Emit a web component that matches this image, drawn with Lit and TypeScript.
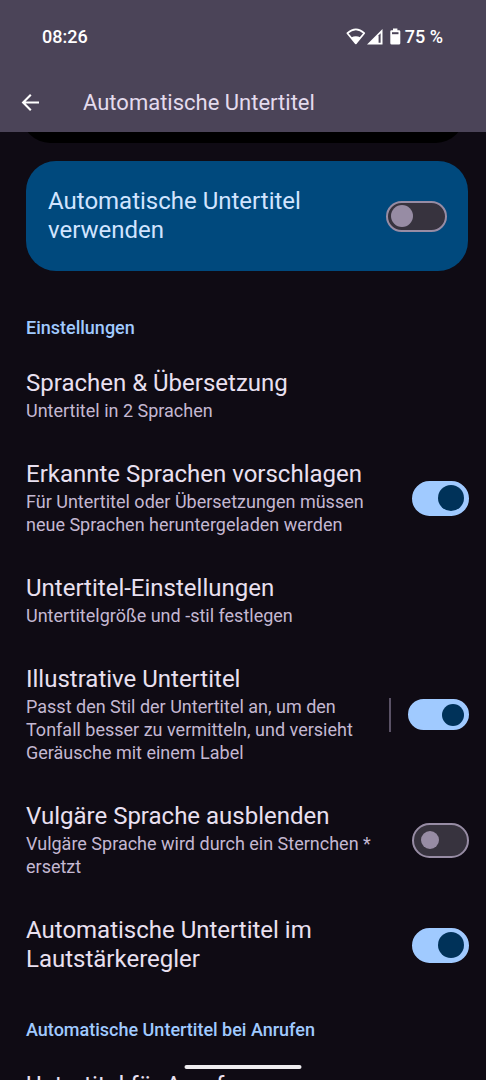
import { LitElement, html, css, nothing } from "lit";
import { customElement, property } from "lit/decorators.js";

interface Setting {
  id: string;
  title: string;
  summary?: string;
  toggle?: "on" | "off";
  compact?: boolean;
}

const SETTINGS: Setting[] = [
  { id: "languages", title: "Sprachen & Übersetzung", summary: "Untertitel in 2 Sprachen" },
  {
    id: "suggest",
    title: "Erkannte Sprachen vorschlagen",
    summary: "Für Untertitel oder Übersetzungen müssen neue Sprachen heruntergeladen werden",
    toggle: "on",
  },
  { id: "style", title: "Untertitel-Einstellungen", summary: "Untertitelgröße und -stil festlegen" },
  {
    id: "expressive",
    title: "Illustrative Untertitel",
    summary: "Passt den Stil der Untertitel an, um den Tonfall besser zu vermitteln, und versieht Geräusche mit einem Label",
    toggle: "on",
    compact: true,
  },
  {
    id: "profanity",
    title: "Vulgäre Sprache ausblenden",
    summary: "Vulgäre Sprache wird durch ein Sternchen * ersetzt",
    toggle: "off",
  },
  { id: "volume", title: "Automatische Untertitel im Lautstärkeregler", toggle: "on" },
];

const CALL_SETTINGS: Setting[] = [{ id: "calls", title: "Untertitel für Anrufe" }];

const switchStyles = css`
  .switch {
    appearance: none;
    box-sizing: border-box;
    flex: none;
    display: flex;
    align-items: center;
    width: 57px;
    height: 35px;
    margin: 0;
    padding: 0 7px;
    border: 2px solid #978ca4;
    border-radius: 18px;
    background: #37333e;
  }
  .switch::before {
    content: "";
    width: 18px;
    height: 18px;
    border-radius: 50%;
    background: #978ca4;
  }
  .switch:checked {
    justify-content: flex-end;
    padding: 0 3px;
    border-color: #a0caff;
    background: #a0caff;
  }
  .switch:checked::before {
    width: 26px;
    height: 26px;
    background: #003259;
  }
  .switch.compact {
    width: 61px;
    height: 31px;
    padding: 0 3px;
  }
  .switch.compact::before {
    width: 22px;
    height: 22px;
  }
`;

@customElement("setting-row")
class SettingRow extends LitElement {
  @property({ attribute: false }) setting!: Setting;

  static styles = [
    switchStyles,
    css`
      :host {
        display: block;
      }
      .row {
        display: flex;
        align-items: center;
        gap: 20px;
        padding: 19px 17px 19px 26px;
      }
      .text {
        flex: 1;
        min-width: 0;
        text-decoration: none;
      }
      .title {
        display: block;
        font-size: 24px;
        line-height: 29px;
        color: #e9e0f0;
      }
      .summary {
        display: block;
        margin-top: 1px;
        font-size: 18px;
        line-height: 23px;
        color: #c4b8d2;
      }
      .divider {
        flex: none;
        width: 2px;
        height: 34px;
        margin-right: -3px;
        background: #5a5266;
      }
    `,
  ];

  render() {
    const s = this.setting;
    const text = html`<span class="title">${s.title}</span>
      ${s.summary ? html`<span class="summary">${s.summary}</span>` : nothing}`;
    if (!s.toggle) {
      return html`<div class="row"><a class="text" href="#${s.id}">${text}</a></div>`;
    }
    return html`<div class="row">
      <label class="text" for=${s.id}>${text}</label>
      ${s.compact ? html`<span class="divider"></span>` : nothing}
      <input
        id=${s.id}
        class="switch ${s.compact ? "compact" : ""}"
        type="checkbox"
        role="switch"
        ?checked=${s.toggle === "on"}
      />
    </div>`;
  }
}

@customElement("app-root")
class AppRoot extends LitElement {
  static styles = [
    switchStyles,
    css`
      :host {
        display: flex;
        flex-direction: column;
        position: relative;
        height: 100vh;
        overflow: hidden;
        background: #0f0b14;
        font-family: Roboto, "Noto Sans", sans-serif;
      }
      .header {
        flex: none;
        background: #4b4458;
      }
      .status {
        display: flex;
        justify-content: space-between;
        align-items: center;
        height: 73px;
        padding: 0 43px 0 42px;
        font-size: 18px;
        font-weight: 500;
        line-height: 24px;
        color: #ffffff;
      }
      .indicators {
        display: flex;
        align-items: center;
      }
      .icons {
        width: 56px;
        height: 20px;
        margin-right: 3px;
      }
      .bar {
        display: flex;
        align-items: center;
        gap: 40px;
        height: 59px;
        padding: 0 18px;
      }
      .back {
        display: flex;
        margin: 0;
        padding: 0;
        border: 0;
        background: none;
      }
      .back svg {
        width: 25px;
        height: 25px;
      }
      .heading {
        margin: 0;
        font-size: 22px;
        font-weight: 400;
        line-height: 28px;
        color: #e4dbed;
      }
      .content {
        flex: 1;
        min-height: 0;
        overflow: hidden;
      }
      .preview {
        height: 200px;
        margin: -189px 22px 18px;
        border-radius: 28px;
        background: #000000;
      }
      .main-switch {
        display: flex;
        align-items: center;
        gap: 24px;
        margin: 0 18px 46px 26px;
        padding: 26px 21px 26px 22px;
        border-radius: 30px;
        background: #00497d;
      }
      .main-label {
        flex: 1;
        font-size: 24px;
        line-height: 29px;
        color: #d1e4ff;
      }
      .section {
        margin: 26px 17px 11px 26px;
        font-size: 18px;
        font-weight: 500;
        line-height: 22px;
        color: #a0caff;
      }
      .home {
        position: absolute;
        bottom: 11px;
        left: 50%;
        width: 117px;
        height: 4px;
        border-radius: 2px;
        background: #efedf0;
        transform: translateX(-50%);
      }
    `,
  ];

  render() {
    return html`
      <header class="header">
        <div class="status">
          <span>08:26</span>
          <span class="indicators">
            <svg class="icons" viewBox="0 0 56 20" aria-hidden="true">
              <path d="M1.4 6.2Q10 -1.4 18.2 6.2L9.8 16.4Z" fill="none" stroke="#fff" stroke-width="1.7" stroke-linejoin="round" />
              <path d="M5.2 10.6Q9.8 8 14.4 10.6L9.8 17Z" fill="#fff" />
              <path d="M36.5 2V17.5H21Z" fill="#fff" />
              <path d="M32.6 8.2L34.6 6.2V15.8H32.6Z" fill="#4b4458" />
              <path d="M47 1.5h4.4v1.8h1.6q1.3 0 1.3 1.3v11.6q0 1.4-1.4 1.4h-7.2q-1.4 0-1.4-1.4V4.6q0-1.3 1.3-1.3H47Z" fill="#fff" />
              <path d="M46 5.2h6.5v2H46Z" fill="#4b4458" />
            </svg>
            <span>75 %</span>
          </span>
        </div>
        <div class="bar">
          <button class="back" aria-label="Zurück">
            <svg viewBox="0 0 25 25" fill="none" stroke="#fff" stroke-width="2.1" aria-hidden="true">
              <path d="M21 12.5H5.2M12.8 4.8L5.1 12.5L12.8 20.2" />
            </svg>
          </button>
          <h1 class="heading">Automatische Untertitel</h1>
        </div>
      </header>
      <main class="content">
        <div class="preview"></div>
        <div class="main-switch">
          <label class="main-label" for="main">Automatische Untertitel verwenden</label>
          <input id="main" class="switch compact" type="checkbox" role="switch" />
        </div>
        <div class="section" role="heading" aria-level="2">Einstellungen</div>
        ${SETTINGS.map((s) => html`<setting-row .setting=${s}></setting-row>`)}
        <div class="section" role="heading" aria-level="2">Automatische Untertitel bei Anrufen</div>
        ${CALL_SETTINGS.map((s) => html`<setting-row .setting=${s}></setting-row>`)}
      </main>
      <div class="home"></div>
    `;
  }
}
